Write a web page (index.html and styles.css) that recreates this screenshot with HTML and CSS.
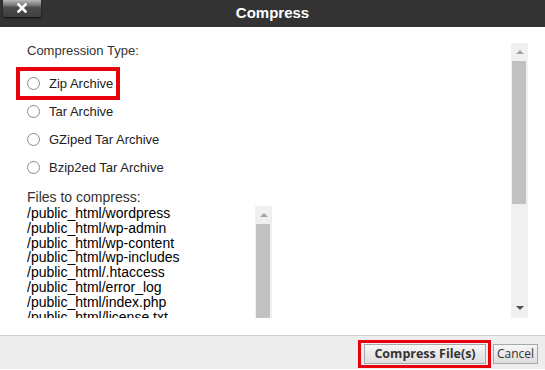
FILE: index.html
```html
<!DOCTYPE html>
<html>
<head>
<meta charset="utf-8">
<link rel="stylesheet" href="styles.css">
</head>
<body>
<div class="dialog">
  <div class="header">
    <div class="header-left">
      <button class="close-btn" aria-label="Close">
        <svg width="10" height="10" viewBox="0 0 10 10"><path d="M1.5 1.5 L8.5 8.5 M8.5 1.5 L1.5 8.5" stroke="#fff" stroke-width="2.6" stroke-linecap="square"/></svg>
      </button>
    </div>
    <div class="title">Compress</div>
    <div class="header-right"></div>
  </div>
  <div class="body">
    <div class="content">
      <div class="section-label">Compression Type:</div>
      <div class="options">
        <label class="option hl"><span class="radio"></span>Zip Archive</label>
        <label class="option"><span class="radio"></span>Tar Archive</label>
        <label class="option"><span class="radio"></span>GZiped Tar Archive</label>
        <label class="option"><span class="radio"></span>Bzip2ed Tar Archive</label>
      </div>
      <div class="files-label">Files to compress:</div>
      <div class="files-box">
        <div class="files-list">
          <div>/public_html/wordpress</div>
          <div>/public_html/wp-admin</div>
          <div>/public_html/wp-content</div>
          <div>/public_html/wp-includes</div>
          <div>/public_html/.htaccess</div>
          <div>/public_html/error_log</div>
          <div>/public_html/index.php</div>
          <div>/public_html/license.txt</div>
        </div>
        <div class="vscroll mini">
          <div class="arrow-box"><span class="tri-up"></span></div>
          <div class="thumb mini-thumb"></div>
        </div>
      </div>
    </div>
    <div class="vscroll main">
      <div class="arrow-box"><span class="tri-up"></span></div>
      <div class="thumb main-thumb"></div>
      <div class="track-fill"></div>
      <div class="arrow-box bottom"><span class="tri-down"></span></div>
    </div>
  </div>
  <div class="footer">
    <span class="btn-hl"><button class="btn primary">Compress File(s)</button></span>
    <button class="btn cancel">Cancel</button>
  </div>
</div>
</body>
</html>
```

FILE: styles.css
```css
html, body {
  margin: 0;
  padding: 0;
  background: #fff;
}
body {
  font-family: "Liberation Sans", Arial, sans-serif;
  width: 545px;
  height: 370px;
  overflow: hidden;
}
.dialog {
  width: 545px;
  height: 370px;
  display: flex;
  flex-direction: column;
}
.header {
  height: 27px;
  background: #333333;
  display: grid;
  grid-template-columns: 1fr auto 1fr;
  align-items: start;
  flex: none;
}
.header-left {
  padding-left: 3px;
}
.close-btn {
  display: flex;
  align-items: center;
  justify-content: center;
  width: 38px;
  height: 17px;
  padding: 0 0 1px 0;
  margin: 0;
  border: none;
  border-radius: 0 0 3px 3px;
  background: linear-gradient(#b9b9b9 0%, #7a7a7a 30%, #4c4c4c 45%, #3f3f3f 100%);
  box-shadow: 0 1px 2px rgba(0,0,0,0.7);
}
.title {
  color: #fff;
  font-weight: bold;
  font-size: 15px;
  line-height: 26px;
}
.body {
  flex: none;
  height: 275px;
  padding: 16px 17px 17px 16px;
  display: flex;
  background: #fff;
}
.content {
  flex: 1;
  overflow: hidden;
  padding-left: 11px;
}
.section-label {
  font-size: 13px;
  line-height: 16px;
  color: #333;
}
.options {
  margin-top: 10px;
  display: flex;
  flex-direction: column;
}
.option {
  height: 28px;
  display: flex;
  align-items: center;
  font-size: 13px;
  color: #222;
  position: relative;
}
.option.hl::after {
  content: "";
  position: absolute;
  left: -11px;
  top: -2px;
  width: 96px;
  height: 25px;
  border: 4px solid #e8000c;
}
.radio {
  width: 11px;
  height: 11px;
  border: 1px solid #8a8a8a;
  border-radius: 50%;
  background: #fff;
  margin-right: 9px;
  flex: none;
}
.files-label {
  margin-top: 9px;
  font-size: 14px;
  line-height: 15px;
  color: #333;
}
.files-box {
  margin-top: 1px;
  width: 245px;
  height: 150px;
  display: flex;
}
.files-list {
  flex: 1;
  font-size: 14px;
  line-height: 14.8px;
  color: #000;
  overflow: hidden;
  white-space: nowrap;
}
.vscroll {
  display: flex;
  flex-direction: column;
  background: #f0f0f0;
  flex: none;
  width: 17px;
}
.arrow-box {
  height: 18px;
  display: flex;
  align-items: center;
  justify-content: center;
  flex: none;
}
.arrow-box.bottom {
  height: 20px;
}
.tri-up {
  width: 0;
  height: 0;
  border-left: 4px solid transparent;
  border-right: 4px solid transparent;
  border-bottom: 4px solid #a3a3a3;
}
.tri-down {
  width: 0;
  height: 0;
  border-left: 4px solid transparent;
  border-right: 4px solid transparent;
  border-top: 4px solid #505050;
}
.thumb {
  background: #c1c1c1;
  margin: 0 2px 0 1px;
}
.main-thumb {
  height: 143px;
  flex: none;
}
.mini-thumb {
  flex: 1;
}
.track-fill {
  flex: 1;
}
.footer {
  flex: none;
  height: 34px;
  box-sizing: border-box;
  border-top: 1px solid #cfcfcf;
  background: #ededed;
  display: flex;
  justify-content: flex-end;
  align-items: flex-end;
  padding: 0 7px 1px 0;
  gap: 2px;
}
.btn-hl {
  display: flex;
  border: 3px solid #e8000c;
  padding: 1px 2px 1px 3px;
}
.btn {
  font-family: "Open Sans", sans-serif;
  height: 20px;
  margin: 0;
  border: 1px solid #a9a9a9;
  background: linear-gradient(#f6f6f6, #dddddd);
  color: #222;
  padding: 0 3px;
  font-size: 12.5px;
  line-height: 18px;
}
.btn.primary {
  font-weight: 700;
  color: #333;
  width: 122px;
}
.btn.cancel {
  font-size: 12px;
  color: #333;
  margin-bottom: 4px;
  width: 45px;
  padding: 0 2px;
}
```
